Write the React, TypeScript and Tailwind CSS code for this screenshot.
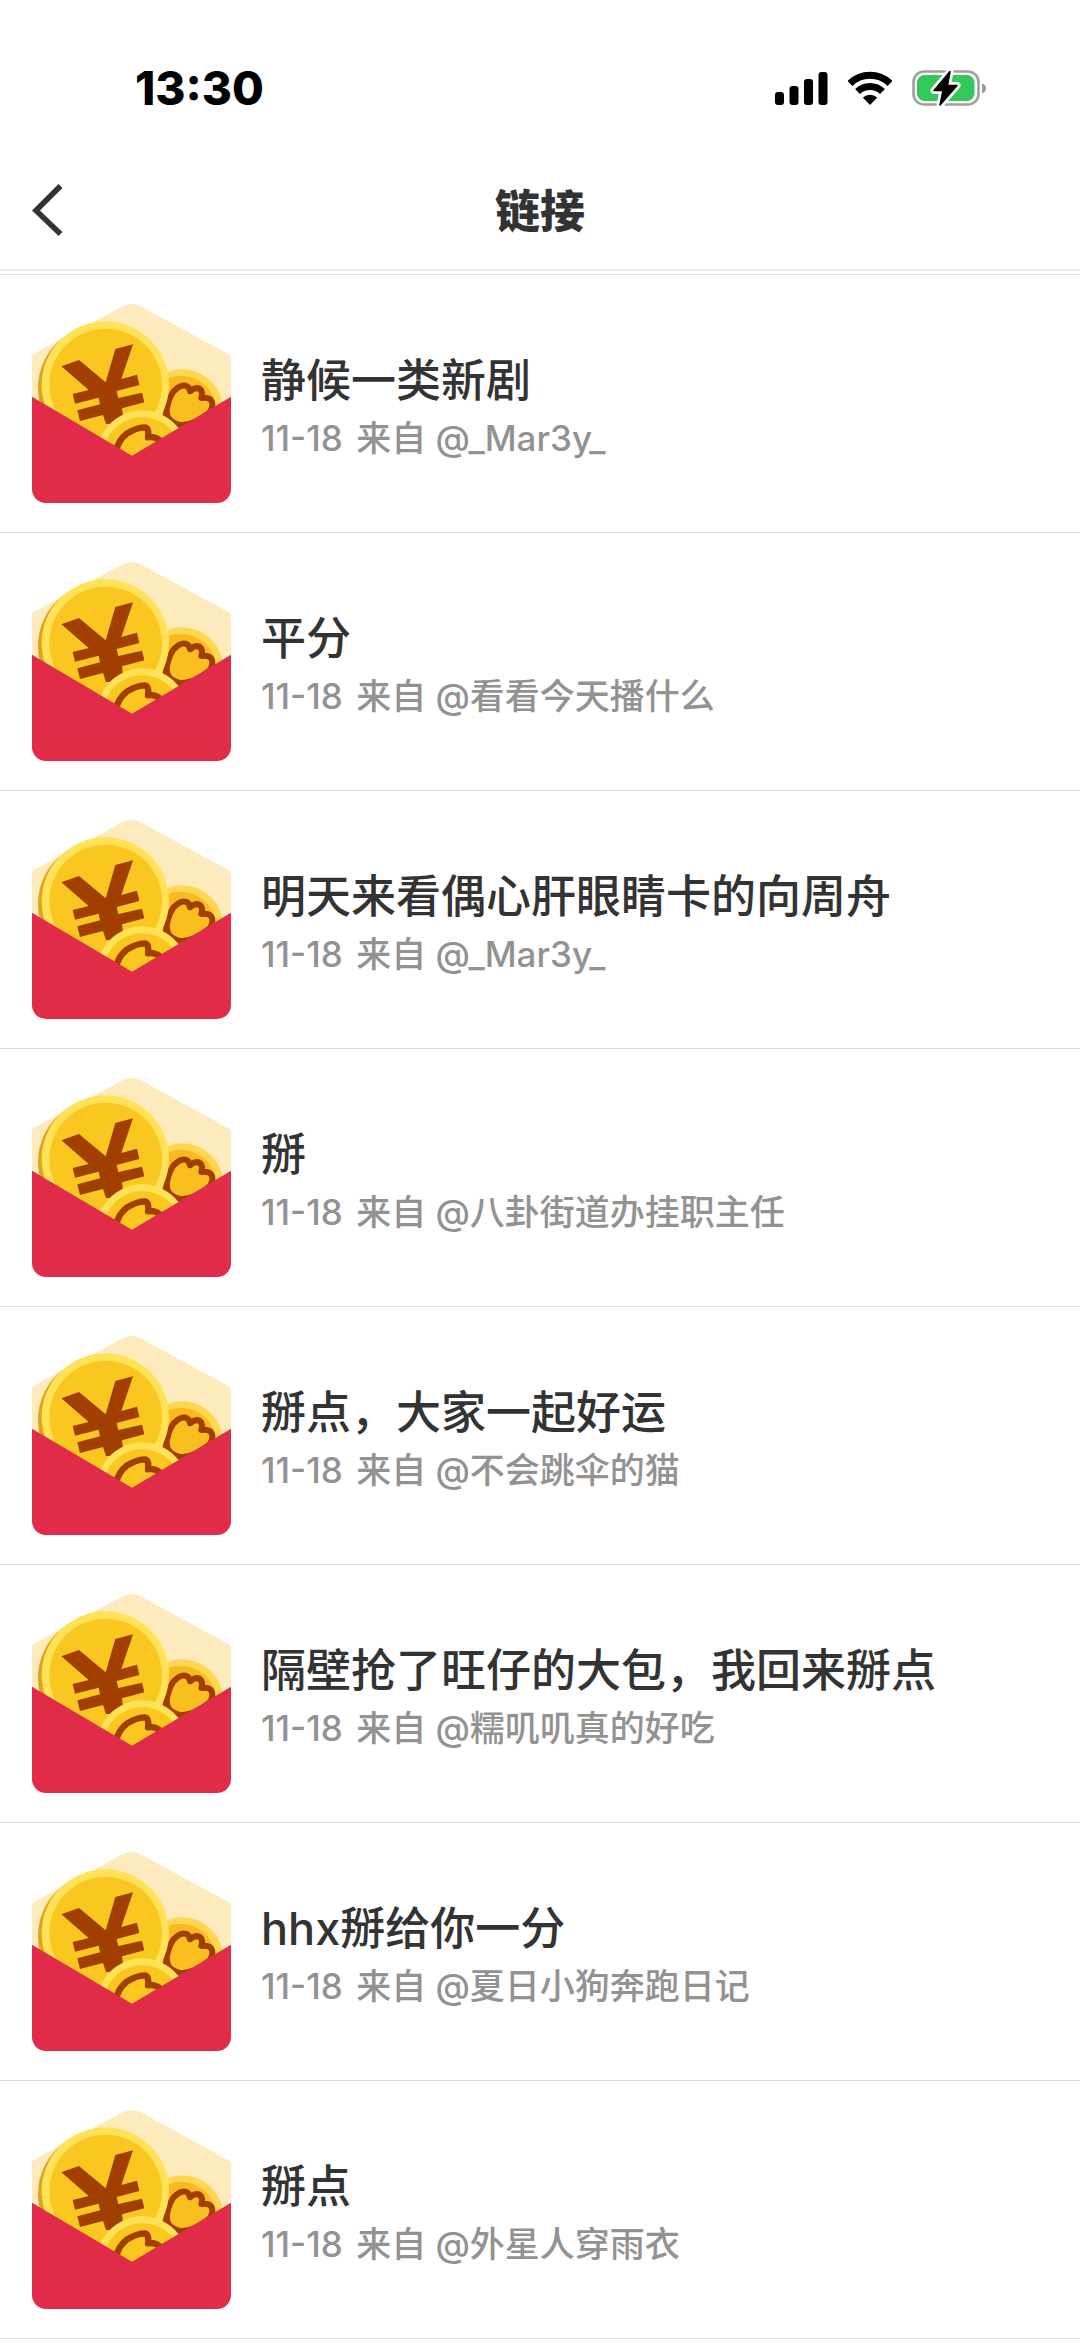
import React from "react";

type Row = { title: string; from: string };

const rows: Row[] = [
  { title: "静候一类新剧", from: "_Mar3y_" },
  { title: "平分", from: "看看今天播什么" },
  { title: "明天来看偶心肝眼睛卡的向周舟", from: "_Mar3y_" },
  { title: "掰", from: "八卦街道办挂职主任" },
  { title: "掰点，大家一起好运", from: "不会跳伞的猫" },
  { title: "隔壁抢了旺仔的大包，我回来掰点", from: "糯叽叽真的好吃" },
  { title: "hhx掰给你一分", from: "夏日小狗奔跑日记" },
  { title: "掰点", from: "外星人穿雨衣" },
];

function RedPacket() {
  return (
    <svg viewBox="96 72 597 597" className="size-[199px] shrink-0 rounded-[14px]" aria-hidden="true">
      <path d="M96 229Q97 224 104 220L368 79Q395 65 422 79L686 223Q692 226 693 232V420H96Z" fill="#feebbd" />
      <circle cx="546" cy="392" r="124" fill="#ffd650" />
      <circle cx="542" cy="394" r="107" fill="#f9ba21" />
      <path
        d="M498 405Q502 362 520 335Q540 314 556 317Q568 320 570 334Q590 318 602 329Q609 338 604 354Q630 350 636 366Q640 380 630 396Q590 432 545 436Q512 432 498 405Z"
        fill="#f9be20"
        stroke="#a13f00"
        strokeWidth="18"
        strokeLinejoin="round"
      />
      <path d="M487 405L508 390Q512 425 540 432L520 446Z" fill="#a13f00" />
      <circle cx="304" cy="324" r="190" fill="#e0a31a" />
      <circle cx="316" cy="315" r="191" fill="#ffe257" />
      <circle cx="317" cy="315" r="169" fill="#fac720" />
      <path d="M184 259L237 240L317 307L346 207L399 193L364 297L411 284L418 315L350 333L355 354L426 338L433 367L366 385L372 432H318L309 405L240 423L232 391L300 373L296 353L225 371L218 342L266 330Z" fill="#a13f00" />
      <circle cx="427" cy="527" r="136" fill="#ffe257" />
      <circle cx="427" cy="527" r="116" fill="#fac720" />
      <path
        d="M349 512Q354 482 380 461Q408 443 434 442Q448 444 444 472Q462 468 478 480L492 494"
        fill="none"
        stroke="#a13f00"
        strokeWidth="19"
        strokeLinejoin="round"
      />
      <path d="M96 350L396 527L693 350V669H96Z" fill="#e02b49" />
    </svg>
  );
}

function StatusIcons() {
  return (
    <div className="flex items-center gap-5 text-black">
      <svg viewBox="0 0 53 34" className="h-[34px] w-[53px]" fill="currentColor" role="img" aria-label="Signal">
        <rect x="0" y="21" width="9" height="13" rx="3" />
        <rect x="14.500" y="15" width="9" height="19" rx="3" />
        <rect x="29" y="8" width="9" height="26" rx="3" />
        <rect x="43.500" y="1" width="9" height="33" rx="3" />
      </svg>
      <svg viewBox="1 0 44 34" className="h-[34px] w-11" role="img" aria-label="Wi-Fi">
        <g fill="none" stroke="#000" strokeWidth="7">
          <path d="M3 12.500A28.500 28.500 0 0 1 43 12.500" />
          <path d="M10.500 20.500A18 18 0 0 1 35.500 20.500" />
        </g>
        <path d="M23 34L15.800 26.600A10.500 10.500 0 0 1 30.200 26.600Z" />
      </svg>
      <svg viewBox="0 0 74 38" className="h-[38px] w-[74px]" role="img" aria-label="Battery charging">
        <rect x="1.500" y="2.500" width="65" height="33" rx="10.500" fill="none" stroke="#a0a0a0" strokeWidth="2.600" />
        <path d="M70 14.500Q74 15.500 74 19T70 24.500Z" fill="#9a9a9a" />
        <rect x="5" y="6" width="57.500" height="26" rx="7.500" fill="#34c759" />
        <path d="M38 2.500L22 21.500H31L28 36L45 16.500H35.500Z" fill="#000" stroke="#fff" strokeWidth="7" strokeLinejoin="round" paintOrder="stroke" />
        <path d="M38 2.500L22 21.500H31L28 36L45 16.500H35.500Z" fill="#000" stroke="#000" strokeWidth="1.500" strokeLinejoin="round" />
      </svg>
    </div>
  );
}

export default function App() {
  return (
    <div
      lang="zh-CN"
      className="min-h-screen w-full overflow-hidden bg-white font-['Inter','Noto_Sans_CJK_SC',sans-serif] text-[#333333]"
    >
      <div className="flex h-[150px] items-center justify-between pt-[25px] pr-[94px] pl-[135px]">
        <span className="text-[46px] leading-none font-extrabold text-black">13:30</span>
        <StatusIcons />
      </div>
      <header className="grid h-[121px] grid-cols-[1fr_auto_1fr] items-center border-b-2 border-[#eeeeee] px-8">
        <button type="button" aria-label="返回" className="w-fit">
          <svg viewBox="0 0 32 52" className="h-[52px] w-8" fill="none" stroke="#333" strokeWidth="5.500">
            <path d="M28.500 2L4 26.500L28.500 50" />
          </svg>
        </button>
        <h1 className="pt-1 text-[45px] leading-none font-black">链接</h1>
      </header>
      <ul className="mt-[3px] border-t border-[#dddddd]">
        {rows.map((row, i) => (
          <li key={i} className="border-b border-[#dddddd]">
            <a href="#" className="flex items-center gap-[30px] px-8 py-[29px]">
              <RedPacket />
              <div className="min-w-0 pt-2 whitespace-nowrap">
                <h2 className="text-[45px] leading-[60px] font-medium">{row.title}</h2>
                <p className="text-[35px] leading-[54px] font-medium text-[#929292]">
                  <time className="mr-1">11-18</time> 来自 @{row.from}
                </p>
              </div>
            </a>
          </li>
        ))}
      </ul>
    </div>
  );
}
